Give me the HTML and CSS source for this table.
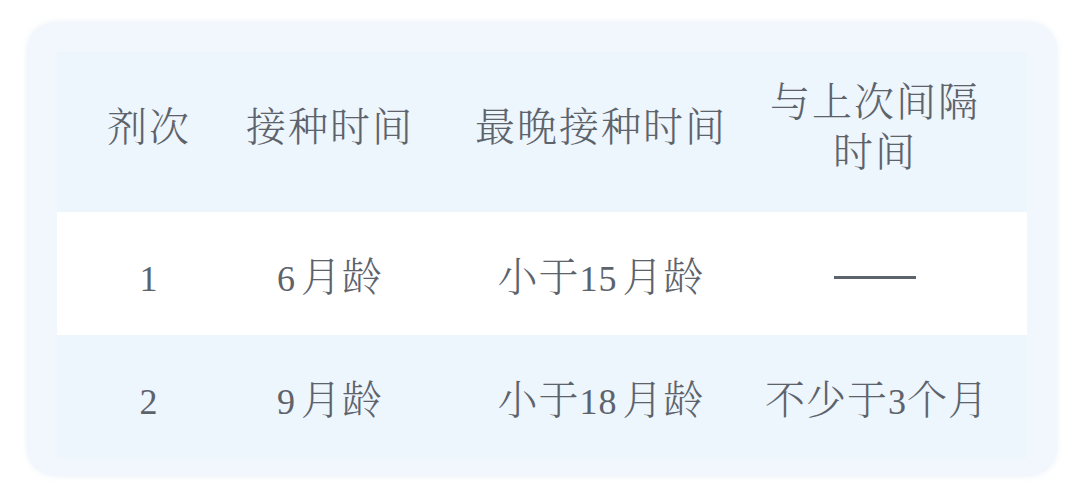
FILE: index.html
```html
<!DOCTYPE html>
<html lang="zh-CN">
<head>
<meta charset="utf-8">
<link rel="stylesheet" href="styles.css">
</head>
<body>
<div class="card">
  <div class="table">
    <div class="row head">
      <div class="cell c1">剂次</div>
      <div class="cell c2">接种时间</div>
      <div class="cell c3">最晚接种时间</div>
      <div class="cell c4">与上次间隔时间</div>
    </div>
    <div class="row odd">
      <div class="cell c1"><span class="num">1</span></div>
      <div class="cell c2"><span class="num">6</span> 月龄</div>
      <div class="cell c3">小于<span class="num">15</span> 月龄</div>
      <div class="cell c4"><span class="dash"></span></div>
    </div>
    <div class="row">
      <div class="cell c1"><span class="num">2</span></div>
      <div class="cell c2"><span class="num">9</span> 月龄</div>
      <div class="cell c3">小于<span class="num">18</span> 月龄</div>
      <div class="cell c4">不少于<span class="num">3</span>个月</div>
    </div>
  </div>
</div>
</body>
</html>
```
FILE: styles.css
```css
html, body {
  margin: 0;
  padding: 0;
  background: #ffffff;
}
body {
  width: 1080px;
  height: 500px;
  overflow: hidden;
  font-family: "Liberation Serif", "Noto Serif CJK SC", "AR PL UKai CN", "Noto Sans CJK SC", serif;
  color: #5d636b;
}
.card {
  margin: 22px 23px 0 27px;
  height: 454px;
  box-sizing: border-box;
  padding: 30px 30px 18px;
  border-radius: 28px;
  background: #f2f7fd;
  box-shadow: 0 0 6px rgba(200, 215, 235, 0.35);
}
.table {
  background: #edf5fd;
}
.row {
  display: grid;
  grid-template-columns: 184px 178px 346px 262px;
  align-items: center;
  height: 123px;
  padding-top: 10px;
  box-sizing: border-box;
}
.row.head {
  height: 160px;
  padding-top: 0;
  padding-bottom: 8px;
}
.row.odd {
  background: #ffffff;
}
.cell {
  text-align: center;
  font-size: 40px;
  letter-spacing: 1px;
  line-height: 50px;
  font-weight: 300;
  white-space: nowrap;
  word-spacing: -6px;
}
.head .cell {
  letter-spacing: 2px;
  white-space: normal;
}
.num {
  font-size: 36px;
}
.c3 {
  padding-left: 18px;
}
.c4 {
  padding-right: 42px;
}
.dash {
  display: inline-block;
  width: 82px;
  height: 3px;
  margin-bottom: 10px;
  background: #5d636b;
  vertical-align: middle;
}
```
